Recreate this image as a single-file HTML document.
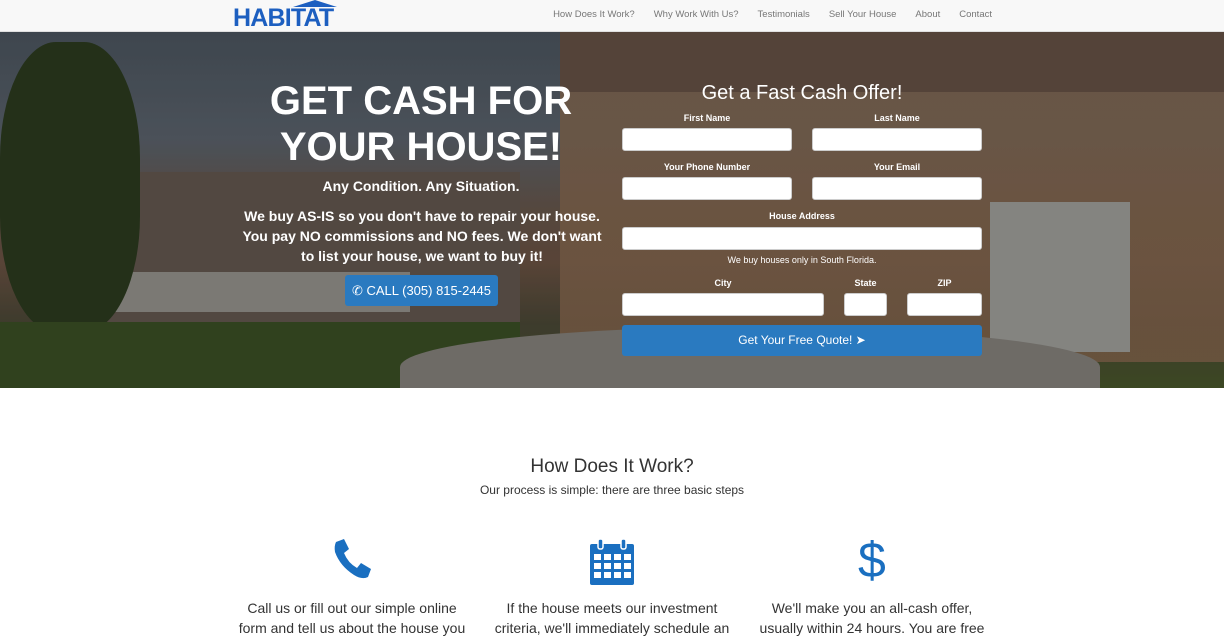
<!DOCTYPE html>
<html><head><style>
*{box-sizing:border-box;margin:0;padding:0}
body{width:1224px;height:640px;overflow:hidden;font-family:"Liberation Sans",Arial,sans-serif;background:#fff;color:#333}
.nav{height:32px;background:#f8f8f8;border-bottom:1px solid #e0e0e0;position:relative}
.logo{position:absolute;left:233px;top:4px;font-weight:bold;font-size:25px;color:#1d5fc0;letter-spacing:-0.8px;line-height:28px}
.logo .roof{position:absolute;left:60px;top:-4px;width:0;height:0;border-left:22px solid transparent;border-right:22px solid transparent;border-bottom:7px solid #1d5fc0}
.menu{position:absolute;right:232px;top:9px;font-size:9.5px;color:#777}
.menu span{margin-left:19px}
.hero{position:absolute;top:32px;left:0;width:1224px;height:356px;overflow:hidden;
background:linear-gradient(180deg,#4e5862 0%,#5e6670 30%,#6b5a4e 50%,#6e5545 65%,#4d4a38 82%,#4b5a2c 100%)}
.hero .house{position:absolute;left:560px;top:0;width:680px;height:330px;background:linear-gradient(180deg,#8a6e56,#8a6a50);opacity:.85}
.hero .roofr{position:absolute;left:560px;top:0;width:680px;height:60px;background:#6a5448}
.hero .garage{position:absolute;left:990px;top:170px;width:140px;height:150px;background:#a5a5a0}
.hero .drive{position:absolute;left:400px;top:295px;width:700px;height:80px;background:#8a8680;border-radius:60% 60% 0 0}
.hero .grass{position:absolute;left:0;top:290px;width:520px;height:66px;background:#3d5226}
.hero .trees{position:absolute;left:0;top:10px;width:140px;height:290px;background:#2d3d20;border-radius:40%}
.hero .porch{position:absolute;left:100px;top:140px;width:420px;height:150px;background:#675a52}
.hero .rail{position:absolute;left:110px;top:240px;width:300px;height:40px;background:#9a9892}
.shade{position:absolute;inset:0;background:rgba(0,0,0,.2)}
.h1{position:absolute;left:240px;top:46px;width:362px;text-align:center;color:#fff;font-weight:bold;font-size:40px;line-height:46px}
.sub{position:absolute;left:240px;top:146px;width:362px;text-align:center;color:#fff;font-weight:bold;font-size:14px}
.para{position:absolute;left:236px;top:174px;width:372px;text-align:center;color:#fff;font-weight:bold;font-size:14px;line-height:20px}
.call{position:absolute;left:345px;top:243px;width:153px;height:31px;background:#2a7ac0;color:#fff;border-radius:3px;font-size:13px;text-align:center;line-height:31px}
.ft{position:absolute;left:622px;top:50px;width:360px;text-align:center;color:#fff;font-size:20px}
.lbl{position:absolute;color:#fff;font-weight:bold;font-size:9px;text-align:center}
.in{position:absolute;background:#fff;border:1px solid #ccc;border-radius:3px;height:23px}
.btn{position:absolute;left:622px;top:293px;width:360px;height:31px;background:#2a7ac0;color:#fff;border-radius:3px;text-align:center;line-height:31px;font-size:12px}
h2{position:absolute;top:456px;left:0;width:1224px;text-align:center;font-weight:normal;font-size:19px;color:#333}
.lead{position:absolute;top:483px;left:0;width:1224px;text-align:center;font-size:12px;color:#333}
.col{position:absolute;top:598px;width:240px;text-align:center;font-size:14px;line-height:20px;color:#333}
.ic{position:absolute;top:538px}
</style></head><body>
<div class="nav"><div class="logo">HABITAT<div class="roof"></div></div>
<div class="menu"><span>How Does It Work?</span><span>Why Work With Us?</span><span>Testimonials</span><span>Sell Your House</span><span>About</span><span>Contact</span></div></div>
<div class="hero">
<div class="house"></div><div class="roofr"></div><div class="porch"></div><div class="rail"></div><div class="trees"></div><div class="garage"></div><div class="grass"></div><div class="drive"></div><div class="shade"></div>
<div class="h1">GET CASH FOR YOUR HOUSE!</div>
<div class="sub">Any Condition. Any Situation.</div>
<div class="para">We buy AS-IS so you don't have to repair your house. You pay NO commissions and NO fees. We don't want to list your house, we want to buy it!</div>
<div class="call">&#9990; CALL (305) 815-2445</div>
<div class="ft">Get a Fast Cash Offer!</div>
<div class="lbl" style="left:622px;top:81px;width:170px">First Name</div>
<div class="lbl" style="left:812px;top:81px;width:170px">Last Name</div>
<div class="in" style="left:622px;top:96px;width:170px"></div>
<div class="in" style="left:812px;top:96px;width:170px"></div>
<div class="lbl" style="left:622px;top:130px;width:170px">Your Phone Number</div>
<div class="lbl" style="left:812px;top:130px;width:170px">Your Email</div>
<div class="in" style="left:622px;top:145px;width:170px"></div>
<div class="in" style="left:812px;top:145px;width:170px"></div>
<div class="lbl" style="left:622px;top:179px;width:360px">House Address</div>
<div class="in" style="left:622px;top:195px;width:360px"></div>
<div class="lbl" style="left:622px;top:223px;width:360px;font-weight:normal">We buy houses only in South Florida.</div>
<div class="lbl" style="left:622px;top:246px;width:202px">City</div>
<div class="lbl" style="left:844px;top:246px;width:43px">State</div>
<div class="lbl" style="left:907px;top:246px;width:75px">ZIP</div>
<div class="in" style="left:622px;top:261px;width:202px"></div>
<div class="in" style="left:844px;top:261px;width:43px"></div>
<div class="in" style="left:907px;top:261px;width:75px"></div>
<div class="btn">Get Your Free Quote! &#10148;</div>
</div>
<h2>How Does It Work?</h2>
<div class="lead">Our process is simple: there are three basic steps</div>
<svg class="ic" style="left:332px" width="40" height="42" viewBox="0 0 40 42"><path d="M4 4 L12 1 L17 11 L12 15 Q16 25 25 30 L29 25 L39 31 L36 39 Q30 42 22 37 Q8 28 3 14 Q2 8 4 4Z" fill="#1a6fc0"/></svg>
<svg class="ic" style="left:589px" width="46" height="48" viewBox="0 0 46 48"><rect x="1" y="6" width="44" height="41" rx="2" fill="#1a6fc0"/><rect x="9" y="1" width="5" height="10" rx="2" fill="#1a6fc0" stroke="#fff" stroke-width="1.5"/><rect x="32" y="1" width="5" height="10" rx="2" fill="#1a6fc0" stroke="#fff" stroke-width="1.5"/><g fill="#fff"><rect x="5" y="16" width="7" height="6"/><rect x="15" y="16" width="7" height="6"/><rect x="25" y="16" width="7" height="6"/><rect x="35" y="16" width="7" height="6"/><rect x="5" y="25" width="7" height="6"/><rect x="15" y="25" width="7" height="6"/><rect x="25" y="25" width="7" height="6"/><rect x="35" y="25" width="7" height="6"/><rect x="5" y="34" width="7" height="6"/><rect x="15" y="34" width="7" height="6"/><rect x="25" y="34" width="7" height="6"/><rect x="35" y="34" width="7" height="6"/></g></svg>
<div class="ic" style="left:858px;top:530px;font-size:50px;color:#1a6fc0;line-height:60px">$</div>
<div class="col" style="left:232px">Call us or fill out our simple online form and tell us about the house you</div>
<div class="col" style="left:492px">If the house meets our investment criteria, we'll immediately schedule an</div>
<div class="col" style="left:752px">We'll make you an all-cash offer, usually within 24 hours. You are free</div>
</body></html>
